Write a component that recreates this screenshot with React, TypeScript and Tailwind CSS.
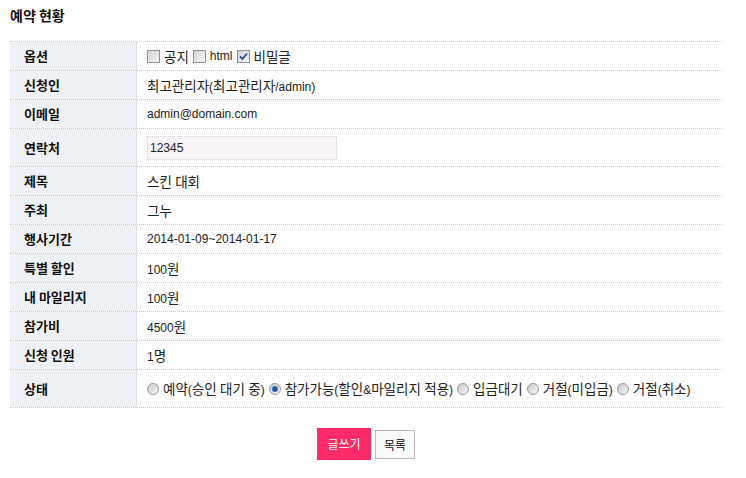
import React from "react";

const font = { fontFamily: '"Liberation Sans", "Noto Sans CJK KR", sans-serif' };

function T({ children }: { children: string }) {
  const parts = children.match(/[\uAC00-\uD7A3]+|[^\uAC00-\uD7A3]+/g) || [];
  return (
    <span className="whitespace-pre">
      {parts.map((p, i) =>
        /[\uAC00-\uD7A3]/.test(p) ? (
          <span key={i} className="text-[13.5px]" style={{ fontFamily: '"Noto Sans CJK KR", sans-serif' }}>
            {p}
          </span>
        ) : (
          <span key={i}>{p}</span>
        )
      )}
    </span>
  );
}

function Check({ checked }: { checked?: boolean }) {
  return (
    <span className="inline-flex h-[13px] w-[13px] shrink-0 items-center justify-center border border-[#8f8f8f] bg-gradient-to-br from-[#d4d4d4] to-[#f4f4f4]">
      {checked && (
        <svg width="9" height="9" viewBox="0 0 9 9">
          <path d="M1 4.5 L3.5 7 L8 1.5" stroke="#2b4a9a" strokeWidth="1.8" fill="none" />
        </svg>
      )}
    </span>
  );
}

function Radio({ checked }: { checked?: boolean }) {
  return (
    <span className="inline-flex h-[12px] w-[12px] shrink-0 items-center justify-center rounded-full border border-[#9a9a9a] bg-gradient-to-br from-[#c8c8c8] to-[#f5f5f5]">
      {checked && <span className="h-[6px] w-[6px] rounded-full bg-[#1d4f8c] shadow-[inset_0_0_2px_#7fc0ff]" />}
    </span>
  );
}

function Row({ label, children, tall }: { label: string; children: React.ReactNode; tall?: boolean }) {
  return (
    <div className={`flex border-b border-dotted border-[#c8c8c8] ${tall ? "h-[38px]" : "h-[29px]"}`}>
      <div
        className="flex w-[127px] shrink-0 items-center border-r border-dotted border-[#d0d0d0] bg-[#eef2f7] pl-[14px] text-[13px] font-bold text-[#111]"
        style={{ fontFamily: '"Noto Sans CJK KR", sans-serif' }}
      >
        {label}
      </div>
      <div className="flex flex-1 items-center pl-[10px] text-[12px] text-[#222]">{children}</div>
    </div>
  );
}

export default function App() {
  return (
    <div className="h-[478px] w-[746px] bg-white" style={font}>
      <div
        className="pl-[10px] pt-[5px] text-[14px] font-bold text-[#111]"
        style={{ fontFamily: '"Noto Sans CJK KR", sans-serif' }}
      >
        예약 현황
      </div>
      <div className="ml-[10px] mt-[15px] w-[712px] border-t border-dotted border-[#c8c8c8]">
        <Row label="옵션">
          <span className="flex items-center gap-[4px]">
            <Check /> <T>공지</T>
            <Check /> <T>html</T>
            <Check checked /> <T>비밀글</T>
          </span>
        </Row>
        <Row label="신청인"><T>최고관리자(최고관리자/admin)</T></Row>
        <Row label="이메일"><T>admin@domain.com</T></Row>
        <Row label="연락처" tall>
          <div className="flex h-[24px] w-[190px] items-center border border-dotted border-[#d4d4d4] bg-[#fbf4f8] pl-[2px] text-[12px]">
            12345
          </div>
        </Row>
        <Row label="제목"><T>스킨 대회</T></Row>
        <Row label="주최"><T>그누</T></Row>
        <Row label="행사기간"><T>2014-01-09~2014-01-17</T></Row>
        <Row label="특별 할인"><T>100원</T></Row>
        <Row label="내 마일리지"><T>100원</T></Row>
        <Row label="참가비"><T>4500원</T></Row>
        <Row label="신청 인원"><T>1명</T></Row>
        <Row label="상태" tall>
          <span className="flex items-center gap-[4px]">
            <Radio /> <T>예약(승인 대기 중)</T>
            <Radio checked /> <T>참가가능(할인&amp;마일리지 적용)</T>
            <Radio /> <T>입금대기</T>
            <Radio /> <T>거절(미입금)</T>
            <Radio /> <T>거절(취소)</T>
          </span>
        </Row>
      </div>
      <div className="ml-[10px] mt-[20px] flex w-[712px] items-start justify-center gap-[4px]">
        <button
          className="h-[32px] w-[54px] bg-[#ff2a68] text-[12px] text-white"
          style={{ fontFamily: '"Noto Sans CJK KR", sans-serif' }}
        >
          글쓰기
        </button>
        <button
          className="mt-[2px] h-[29px] w-[40px] border border-[#c0b8c0] bg-[#fafafa] text-[12px] text-[#111]"
          style={{ fontFamily: '"Noto Sans CJK KR", sans-serif' }}
        >
          목록
        </button>
      </div>
    </div>
  );
}
